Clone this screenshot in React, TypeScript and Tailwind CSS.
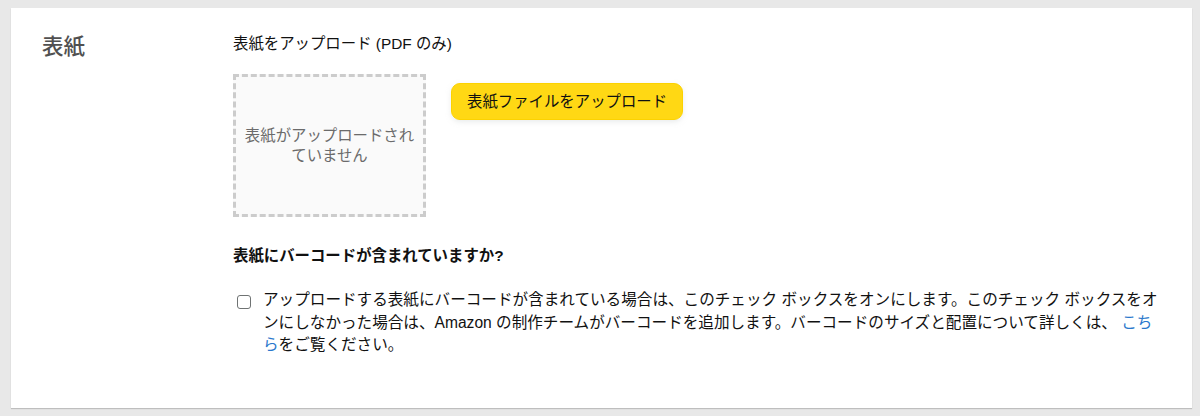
export default function App() {
  return (
    <div
      className="h-[416px] w-[1200px] bg-[#e8e8e8] pt-2 pl-[11px] pr-2"
      style={{ fontFamily: '"Liberation Sans", "Noto Sans CJK JP", sans-serif' }}
    >
      {/* card */}
      <div className="flex h-[400px] w-[1181px] bg-white pt-[25px] pl-[31px] shadow-[0_1px_1px_rgba(0,0,0,0.18)]">
        {/* section title */}
        <div className="w-[191px] shrink-0">
          <h2 className="text-[21.5px] leading-[28px] font-medium text-[#505050]">表紙</h2>
        </div>

        {/* content */}
        <div className="w-[928px] text-[15.4px] text-[#111]">
          <p className="leading-[22px]">表紙をアップロード (PDF のみ)</p>

          <div className="mt-[19px] flex items-start gap-[25px]">
            <div className="flex h-[143px] w-[193px] items-center justify-center border-[3px] border-dashed border-[#cccccc] bg-[#fafafa] px-[8px] text-center leading-[20px] text-[#6b6b6b]">
              表紙がアップロードされていません
            </div>
            <button className="mt-[9px] h-[37px] rounded-[9px] border border-[#fcd200] bg-[#ffd814] px-[15px] text-[15.4px] text-[#0f1111] shadow-[0_2px_5px_rgba(213,217,217,0.5)]">
              表紙ファイルをアップロード
            </button>
          </div>

          <p className="mt-[28px] font-bold leading-[22px]">表紙にバーコードが含まれていますか?</p>

          <label className="mt-[22px] flex items-start gap-[12px] pl-[4px]">
            <input
              type="checkbox"
              className="mt-[6px] h-[14px] w-[14px] shrink-0 appearance-none rounded-[3px] border-[1.5px] border-[#6f7373] bg-white"
            />
            <span className="text-[15.6px] leading-[22.5px] text-[#111]">
              アップロードする表紙にバーコードが含まれている場合は、このチェック ボックスをオンにします。このチェック ボックスをオンにしなかった場合は、Amazon の制作チームがバーコードを追加します。バーコードのサイズと配置について詳しくは、{" "}
              <a href="#" className="text-[#2a78cc]">
                こちら
              </a>
              をご覧ください。
            </span>
          </label>
        </div>
      </div>
    </div>
  );
}
